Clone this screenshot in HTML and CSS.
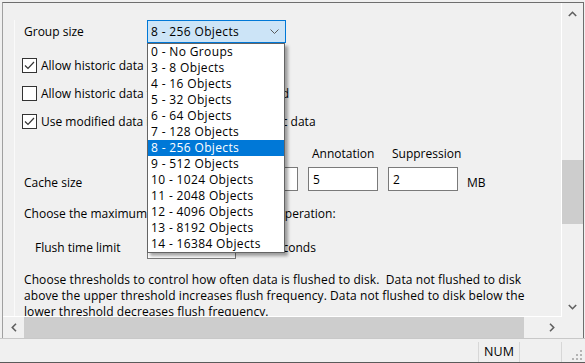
FILE: index.html
```html
<!DOCTYPE html>
<html>
<head>
<meta charset="utf-8">
<link rel="stylesheet" href="styles.css">
</head>
<body>
<div class="window">
  <div class="frame">
    <div class="viewport">
      <div class="page">
        <div class="row-group">
          <span class="label-col">Group size</span>
          <div class="combo">
            <span>8 - 256 Objects</span>
            <svg class="combo-chev" width="9" height="5" viewBox="0 0 9 5"><polyline points="0.5,0.5 4.5,4.5 8.5,0.5" fill="none" stroke="#5a5a5a" stroke-width="1"/></svg>
          </div>
        </div>

        <div class="check-list">
          <label class="check">
            <svg class="box" width="15" height="15" viewBox="0 0 15 15"><rect x="0.5" y="0.5" width="14" height="14" fill="#fff" stroke="#333"/><polyline points="3,7.5 6,10.5 12,4" fill="none" stroke="#333" stroke-width="1.2"/></svg>
            <span>Allow historic data editing</span>
          </label>
          <label class="check">
            <svg class="box" width="15" height="15" viewBox="0 0 15 15"><rect x="0.5" y="0.5" width="14" height="14" fill="#fff" stroke="#333"/></svg>
            <span>Allow historic data to be modified or deleted</span>
          </label>
          <label class="check">
            <svg class="box" width="15" height="15" viewBox="0 0 15 15"><rect x="0.5" y="0.5" width="14" height="14" fill="#fff" stroke="#333"/><polyline points="3,7.5 6,10.5 12,4" fill="none" stroke="#333" stroke-width="1.2"/></svg>
            <span>Use modified data in place of stored historic data</span>
          </label>
        </div>

        <div class="cache-head">
          <span class="label-col"></span>
          <span class="col-head"></span>
          <span class="col-head"></span>
          <span class="col-head">Annotation</span>
          <span class="col-head">Suppression</span>
        </div>
        <div class="cache-row">
          <span class="label-col low">Cache size</span>
          <div class="field"></div>
          <div class="field"></div>
          <div class="field">5</div>
          <div class="field">2</div>
          <span class="unit low">MB</span>
        </div>

        <div class="line">Choose the maximum time allowed per flush operation:</div>

        <div class="flush">
          <span class="label-col indent">Flush time limit</span>
          <div class="field wide"></div>
          <span class="secs">seconds</span>
        </div>

        <p class="para">Choose thresholds to control how often data is flushed to disk.&nbsp; Data not flushed to disk<br>above the upper threshold increases flush frequency. Data not flushed to disk below the<br>lower threshold decreases flush frequency.</p>
      </div>

      <div class="dropdown">
        <div class="opt">0 - No Groups</div>
        <div class="opt">3 - 8 Objects</div>
        <div class="opt">4 - 16 Objects</div>
        <div class="opt">5 - 32 Objects</div>
        <div class="opt">6 - 64 Objects</div>
        <div class="opt">7 - 128 Objects</div>
        <div class="opt sel">8 - 256 Objects</div>
        <div class="opt">9 - 512 Objects</div>
        <div class="opt">10 - 1024 Objects</div>
        <div class="opt">11 - 2048 Objects</div>
        <div class="opt">12 - 4096 Objects</div>
        <div class="opt">13 - 8192 Objects</div>
        <div class="opt">14 - 16384 Objects</div>
      </div>
    </div>

    <div class="vscroll">
      <div class="sb-btn"><svg width="9" height="6" viewBox="0 0 9 6"><polyline points="0.8,5 4.5,1.3 8.2,5" fill="none" stroke="#606060" stroke-width="1.6"/></svg></div>
      <div class="vtrack"><div class="vthumb"></div></div>
      <div class="sb-btn"><svg width="9" height="6" viewBox="0 0 9 6"><polyline points="0.8,1 4.5,4.7 8.2,1" fill="none" stroke="#606060" stroke-width="1.6"/></svg></div>
    </div>

    <div class="hscroll">
      <div class="sb-btn"><svg width="6" height="9" viewBox="0 0 6 9"><polyline points="5,0.8 1.3,4.5 5,8.2" fill="none" stroke="#606060" stroke-width="1.6"/></svg></div>
      <div class="htrack"><div class="hthumb"></div></div>
      <div class="sb-btn"><svg width="6" height="9" viewBox="0 0 6 9"><polyline points="1,0.8 4.7,4.5 1,8.2" fill="none" stroke="#606060" stroke-width="1.6"/></svg></div>
    </div>

    <div class="corner"></div>
  </div>

  <div class="status">
    <div class="status-fill"></div>
    <div class="panel">NUM</div>
    <div class="panel empty"></div>
    <div class="grip">
      <svg width="12" height="12" viewBox="0 0 12 12">
        <rect x="9" y="1" width="2" height="2" fill="#b4b4b4"/>
        <rect x="5" y="5" width="2" height="2" fill="#b4b4b4"/>
        <rect x="9" y="5" width="2" height="2" fill="#b4b4b4"/>
        <rect x="1" y="9" width="2" height="2" fill="#b4b4b4"/>
        <rect x="5" y="9" width="2" height="2" fill="#b4b4b4"/>
        <rect x="9" y="9" width="2" height="2" fill="#b4b4b4"/>
      </svg>
    </div>
  </div>
</div>
</body>
</html>
```
FILE: styles.css
```css
* { box-sizing: border-box; }
html, body { margin: 0; padding: 0; }
body {
  width: 585px;
  height: 363px;
  overflow: hidden;
  background: #f0f0f0;
  font-family: "Open Sans", "Noto Sans", sans-serif;
  font-size: 12px;
  color: #000;
}
.window {
  padding: 2px 1px 0 2px;
}
.frame {
  display: grid;
  grid-template-columns: 559px 21px;
  grid-template-rows: 314px 21px;
  width: 582px;
  border-top: 1px solid #6e6e6e;
  border-left: 1px solid #a0a0a0;
  border-right: 1px solid #6e6e6e;
}
.viewport {
  position: relative;
  overflow: hidden;
  border-right: 1px solid #ffffff;
  border-bottom: 1px solid #ffffff;
}
.page {
  margin-left: 11px;
  height: 100%;
  border-left: 1px solid #fafafa;
  padding-left: 9px;
  white-space: nowrap;
}
.label-col {
  width: 123px;
  flex: none;
}
.row-group {
  display: flex;
  align-items: center;
  height: 23px;
  margin-top: 17px;
}
.combo {
  width: 139px;
  height: 23px;
  border: 1px solid #0078d7;
  background: #cce4f7;
  display: flex;
  align-items: center;
  justify-content: space-between;
  padding: 0 6px 0 3px;
  letter-spacing: 0.35px;
}
.check-list {
  margin-top: 8px;
}
.check {
  display: flex;
  align-items: center;
  gap: 4px;
  height: 28px;
  margin-left: -2px;
}
.box { flex: none; }
.cache-head {
  display: flex;
  align-items: center;
  height: 20px;
  margin-top: 8px;
}
.cache-head .label-col { width: 124px; }
.col-head {
  width: 80px;
  padding-left: 4px;
  flex: none;
}
.cache-row {
  display: flex;
  align-items: center;
  height: 24px;
  margin-top: 4px;
}
.cache-row .label-col { width: 124px; }
.field {
  width: 70px;
  height: 24px;
  flex: none;
  margin-right: 10px;
  border: 1px solid #7a7a7a;
  background: #fff;
  padding-left: 4px;
  display: flex;
  align-items: center;
}
.low { padding-top: 6px; }
.unit { margin-left: -1px; }
.line {
  height: 20px;
  margin-top: 12px;
  display: flex;
  align-items: center;
}
.flush {
  display: flex;
  align-items: center;
  height: 24px;
  margin-top: 12px;
}
.indent { padding-left: 11px; }
.field.wide { width: 89px; margin-right: 0; }
.secs { margin-left: 34px; }
.para {
  margin: 13px 0 0 0;
  line-height: 16px;
  letter-spacing: 0.09px;
}
.dropdown {
  position: absolute;
  left: 144px;
  top: 40px;
  width: 138px;
  height: 210px;
  border: 1px solid #646464;
  background: #fff;
  box-shadow: 3px 3px 3px rgba(0, 0, 0, 0.35);
}
.opt {
  height: 16px;
  line-height: 16px;
  padding-left: 3px;
  white-space: nowrap;
  letter-spacing: 0.35px;
}
.opt.sel {
  background: #0078d7;
  color: #fff;
}
.vscroll {
  display: flex;
  flex-direction: column;
}
.sb-btn {
  flex: none;
  width: 21px;
  height: 21px;
  display: flex;
  align-items: center;
  justify-content: center;
}
.vtrack { flex: 1; }
.vthumb {
  margin-top: 136px;
  height: 64px;
  background: #cdcdcd;
}
.hscroll {
  display: flex;
}
.htrack { flex: 1; }
.hthumb {
  width: 500px;
  height: 21px;
  background: #cdcdcd;
}
.status {
  display: flex;
  height: 25px;
  border-top: 1px solid #c8c8c8;
  border-bottom: 1px solid #5a5a5a;
  margin-left: -2px;
  margin-right: -1px;
}
.status-fill { flex: 1; }
.panel {
  width: 42px;
  margin-top: 3px;
  border-left: 1px solid #d7d7d7;
  border-right: 1px solid #d7d7d7;
  text-align: center;
  line-height: 20px;
  font-size: 12.5px;
}
.panel.empty { border-left: none; }
.grip {
  width: 23px;
  display: flex;
  align-items: flex-end;
  justify-content: flex-end;
  padding: 0 2px 1px 0;
}
```
